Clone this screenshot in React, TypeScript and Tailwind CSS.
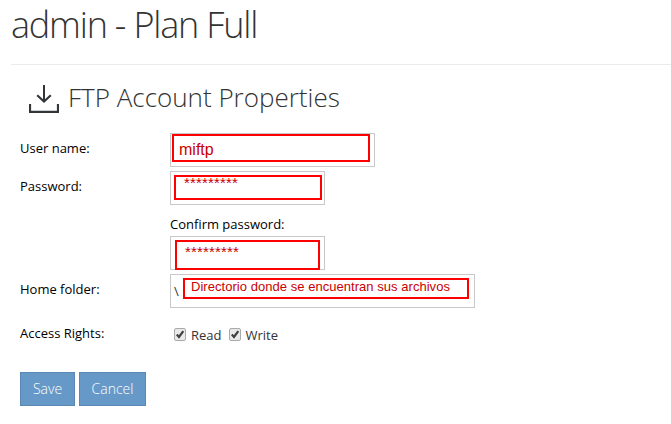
import type { ReactNode } from "react";

function DownloadIcon() {
    return (
        <svg width="30" height="28" viewBox="0 0 30 28" fill="none" stroke="#333638">
            <path d="M15 0V16.2" strokeWidth="2" />
            <path d="M8.2 10.2L15 16.5L21.8 10.2" strokeWidth="2.1" />
            <path d="M1 19V26.8H29V19" strokeWidth="2.2" />
        </svg>
    );
}

function Row({ label, className, children }: { label: string; className: string; children: ReactNode }) {
    return (
        <div className={`flex items-start ${className}`}>
            <div className="w-[150px] shrink-0 pt-[6px] leading-[18px] whitespace-nowrap">{label}</div>
            {children}
        </div>
    );
}

function Field({ className, children }: { className: string; children: ReactNode }) {
    return <div className={`relative h-[34px] shrink-0 border border-[#c8c8c8] bg-white ${className}`}>{children}</div>;
}

function Mark({ className, children }: { className: string; children: ReactNode }) {
    return (
        <div
            className={`absolute border-2 border-[#ff0000] font-['Liberation_Sans',sans-serif] whitespace-nowrap text-[#cc0000] ${className}`}
        >
            {children}
        </div>
    );
}

function Check({ label }: { label: string }) {
    return (
        <div className="flex h-[18px] items-center text-[#333]">
            <svg width="12" height="13" viewBox="0 0 12 13" className="mr-[5px] mb-[3px]">
                <rect x="0.5" y="0.5" width="11" height="12" rx="1.5" fill="#e9e9e9" stroke="#aaa" />
                <path d="M2.8 6.6L5 9L9.3 3.2" fill="none" stroke="#404040" strokeWidth="2.2" />
            </svg>
            {label}
        </div>
    );
}

export default function App() {
    return (
        <div className="h-[424px] w-[671px] overflow-hidden bg-white font-['Open_Sans',sans-serif] text-[13px] text-black">
            <h1 className="ml-[11px] h-[65px] border-b border-[#ebebeb] text-[36px] leading-[50px] font-light tracking-[-1.2px] text-[#333]">
                admin - Plan Full
            </h1>

            <div className="flex h-[68px] items-start pt-[20px] pl-[29px]">
                <DownloadIcon />
                <h2 className="ml-[9px] -mt-[6px] text-[26px] leading-[36px] font-light text-[#333]">FTP Account Properties</h2>
            </div>

            <div className="pl-5">
                <Row label="User name:" className="h-[38px]">
                    <Field className="w-[205px]">
                        <Mark className="top-0 left-px h-[28px] w-[198px] pl-[5px] text-[16px] leading-[27px]">miftp</Mark>
                    </Field>
                </Row>

                <Row label="Password:" className="h-[103px]">
                    <div>
                        <Field className="w-[155px]">
                            <Mark className="top-[3px] left-[3px] h-[25px] w-[148px] pl-[8px] text-[15px] leading-[11px] tracking-[0.15px]">*********</Mark>
                        </Field>
                        <div className="mt-[10px] mb-[3px] leading-[18px]">Confirm password:</div>
                        <Field className="w-[155px]">
                            <Mark className="top-[3px] left-1 h-[30px] w-[145px] pl-[8px] text-[15px] leading-[20px] tracking-[0.15px]">*********</Mark>
                        </Field>
                    </div>
                </Row>

                <Row label="Home folder:" className="h-[44px]">
                    <Field className="w-[305px]">
                        <span className="ml-[3px] leading-[33px] text-[#333]">\</span>
                        <Mark className="top-[3px] left-3 h-[21px] w-[286px] pl-[6px] text-[13px] leading-[14px] tracking-[0.04px]">
                            Directorio donde se encuentran sus archivos
                        </Mark>
                    </Field>
                </Row>

                <Row label="Access Rights:" className="h-[54px]">
                    <div className="flex gap-[7px] pt-[9px] pl-1">
                        <Check label="Read" />
                        <Check label="Write" />
                    </div>
                </Row>

                <div className="flex gap-1 text-[14px] font-light text-white">
                    <button className="h-[34px] w-[55px] border border-[#5b88b2] bg-[#6699c7] pb-[2px]">Save</button>
                    <button className="h-[34px] w-[67px] border border-[#5b88b2] bg-[#6699c7] pb-[2px]">Cancel</button>
                </div>
            </div>
        </div>
    );
}
